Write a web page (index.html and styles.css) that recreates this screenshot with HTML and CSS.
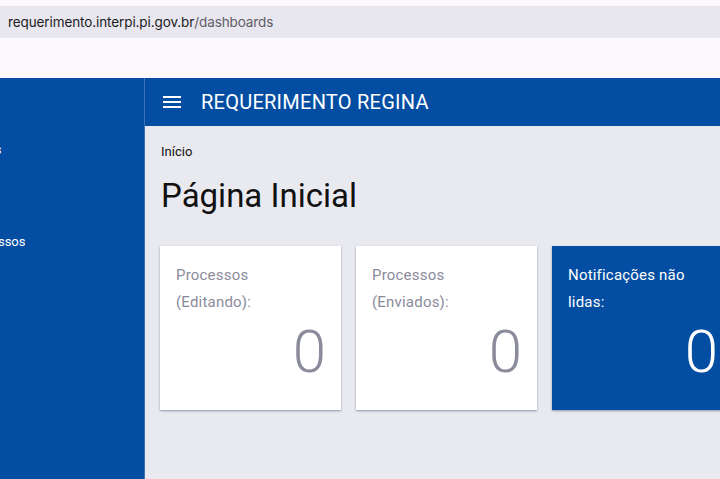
FILE: index.html
```html
<!DOCTYPE html>
<html lang="pt-BR">
<head>
<meta charset="utf-8">
<title>Requerimento Regina</title>
<link rel="stylesheet" href="styles.css">
</head>
<body>
<div class="browser">
  <div class="urlbar"><span class="host">requerimento.interpi.pi.gov.br</span><span class="path">/dashboards</span></div>
</div>
<div class="app">
  <aside class="sidebar">
    <nav class="nav">
      <a class="nav-item">Requerentes</a>
      <a class="nav-item">Dashboards</a>
      <a class="nav-item">Meus Processos</a>
    </nav>
  </aside>
  <div class="main">
    <header class="topbar">
      <svg class="menu" width="18" height="12" viewBox="0 0 18 12"><rect x="0" y="0" width="18" height="2" fill="#fff"/><rect x="0" y="5" width="18" height="2" fill="#fff"/><rect x="0" y="10" width="18" height="2" fill="#fff"/></svg>
      <span class="title">REQUERIMENTO REGINA</span>
    </header>
    <section class="content">
      <div class="crumb">Início</div>
      <h1 class="page-title">Página Inicial</h1>
      <div class="cards">
        <div class="card">
          <div class="card-label">Processos<br>(Editando):</div>
          <div class="card-value">0</div>
        </div>
        <div class="card">
          <div class="card-label">Processos<br>(Enviados):</div>
          <div class="card-value">0</div>
        </div>
        <div class="card card-blue">
          <div class="card-label">Notificações não<br>lidas:</div>
          <div class="card-value">0</div>
        </div>
      </div>
    </section>
  </div>
</div>
</body>
</html>
```
FILE: styles.css
```css
html, body {
  margin: 0;
  padding: 0;
  height: 100%;
  overflow: hidden;
}
body {
  font-family: Roboto, "Noto Sans", sans-serif;
  background: #fdf8fd;
  width: 720px;
  height: 479px;
  display: flex;
  flex-direction: column;
}
.browser {
  height: 78px;
  padding-top: 6px;
  box-sizing: border-box;
  background: #fdf8fd;
  flex: none;
}
.urlbar {
  height: 32px;
  background: #e8e6ee;
  display: flex;
  align-items: center;
  padding-left: 8px;
  font-family: Inter, "Noto Sans", sans-serif;
  font-size: 13.5px;
  letter-spacing: -0.1px;
}
.host { color: #1d1b22; }
.path { color: #5f5c66; }
.app {
  flex: 1;
  display: flex;
  min-height: 0;
}
.sidebar {
  width: 144px;
  flex: none;
  background: #034ea2;
  border-right: 1px solid #3a72b4;
  overflow: hidden;
}
.nav {
  display: flex;
  flex-direction: column;
  margin-left: -71px;
  padding-top: 65px;
  gap: 32px;
}
.nav-item {
  color: #fff;
  font-size: 13px;
  line-height: 14px;
  white-space: nowrap;
}
.main {
  flex: 1;
  display: flex;
  flex-direction: column;
  background: #e9eaf0;
  min-width: 0;
}
.topbar {
  height: 48px;
  background: #034ea2;
  display: flex;
  align-items: center;
  padding-left: 18px;
  flex: none;
}
.menu { display: block; margin-right: 20px; }
.title {
  color: #fff;
  font-size: 20px;
  letter-spacing: 0.25px;
}
.content {
  padding: 18px 0 0 16px;
}
.crumb {
  font-size: 13px;
  color: #111;
  line-height: 16px;
}
.page-title {
  margin: 16px 0 0 0;
  font-size: 33px;
  font-weight: 400;
  line-height: 40px;
  color: #111;
}
.cards {
  display: flex;
  gap: 15px;
  margin-top: 30px;
  margin-left: -1px;
}
.card {
  width: 181px;
  height: 164px;
  flex: none;
  box-sizing: border-box;
  background: #fff;
  padding: 16px 15px 0 16px;
  box-shadow: 0 1px 2px rgba(60, 64, 90, 0.5);
  color: #8a8b9b;
}
.card-label {
  font-size: 15px;
  line-height: 27px;
  letter-spacing: 0.2px;
}
.card-value {
  text-align: right;
  font-size: 60px;
  font-weight: 300;
  line-height: 60px;
  margin-top: 6px;
}
.card-blue {
  background: #034ea2;
  color: #fff;
}
```
